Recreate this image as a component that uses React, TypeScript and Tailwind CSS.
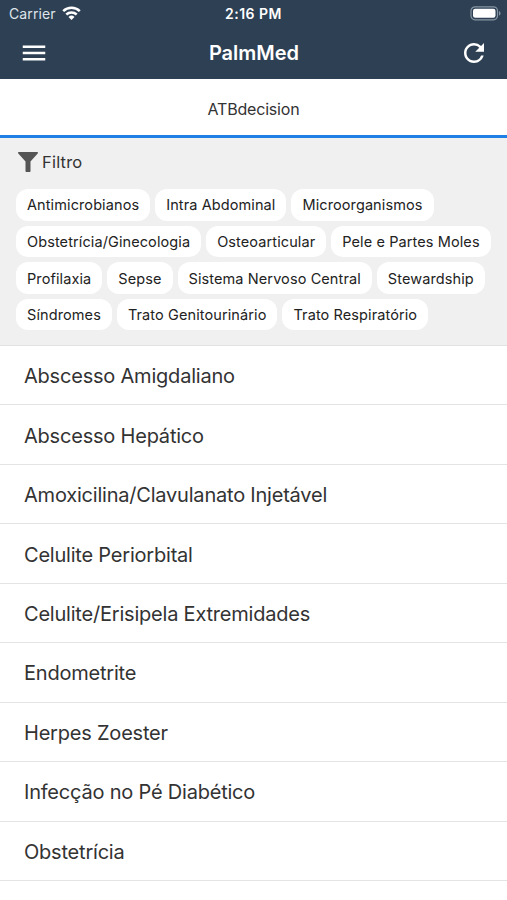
import { MdMenu, MdRefresh } from "react-icons/md";

const filters = [
  ["Antimicrobianos", "Intra Abdominal", "Microorganismos"],
  ["Obstetrícia/Ginecologia", "Osteoarticular", "Pele e Partes Moles"],
  ["Profilaxia", "Sepse", "Sistema Nervoso Central", "Stewardship"],
  ["Síndromes", "Trato Genitourinário", "Trato Respiratório"],
];

const topics = [
  "Abscesso Amigdaliano",
  "Abscesso Hepático",
  "Amoxicilina/Clavulanato Injetável",
  "Celulite Periorbital",
  "Celulite/Erisipela Extremidades",
  "Endometrite",
  "Herpes Zoester",
  "Infecção no Pé Diabético",
  "Obstetrícia",
];

function StatusBar() {
  return (
    <div className="grid grid-cols-3 items-center h-[27px] pl-[9px] pr-[6px] text-[14px]">
      <div className="flex items-center gap-[6px] text-[#dfe5ea] tracking-[0.1px]">
        <span>Carrier</span>
        <svg className="-mt-[2px]" width="19" height="14" viewBox="0 0 19 14" fill="none" stroke="white" strokeWidth="2.5">
          <path d="M1.2 5.2a12 12 0 0 1 16.6 0" />
          <path d="M4.3 8.5a7.6 7.6 0 0 1 10.4 0" />
          <path d="M9.5 14 6.5 10.9a4.3 4.3 0 0 1 6 0z" fill="white" stroke="none" />
        </svg>
      </div>
      <div className="-ml-[3px] text-center font-semibold tracking-[0.5px]">2:16 PM</div>
      <svg className="justify-self-end" width="31" height="15" viewBox="0 0 31 15">
        <rect x="1" y="0.8" width="26.5" height="13" rx="4" fill="none" stroke="#8795a3" strokeWidth="1.2" />
        <rect x="3" y="2.8" width="22.5" height="9" rx="2.2" fill="white" />
        <path d="M29 5v4.6c2-.8 2-3.8 0-4.6z" fill="#8795a3" />
      </svg>
    </div>
  );
}

export default function App() {
  return (
    <div className="h-[900px] overflow-hidden bg-white font-['Inter',sans-serif] text-[#333]">
      <header className="h-[79px] bg-[#2d4054] text-white">
        <StatusBar />
        <div className="flex items-center justify-between h-[51px] pl-[19px] pr-[18px]">
          <MdMenu size={30} />
          <h1 className="text-[20px] font-semibold">PalmMed</h1>
          <MdRefresh size={30} />
        </div>
      </header>

      {/* Tab */}
      <div className="flex items-center justify-center h-[59px] pt-[3px] border-b-[3px] border-[#1f7fe5] text-[16px] tracking-[-0.2px]">
        ATBdecision
      </div>

      {/* Filter chips */}
      <section className="h-[208px] bg-[#f0f0f0] border-b border-[#e2e2e2] px-4">
        <div className="flex items-center gap-1 h-[51px] pb-[3px] pl-[2px] text-[16.5px] tracking-[0.2px]">
          <svg width="20" height="20" viewBox="0 0 20 20" fill="#555">
            <path d="M.8 0h18.400c.9 0 1.100 1 .5 1.600L12.500 9.600V19c0 .6-.4 1-1 1h-3c-.6 0-1-.4-1-1V9.600L.3 1.600C-.3 1-.1 0 .8 0z" />
          </svg>
          <span>Filtro</span>
        </div>
        <div className="flex flex-col gap-[5px]">
          {filters.map((row) => (
            <div key={row[0]} className="flex gap-[5px]">
              {row.map((name) => (
                <button key={name} className="h-[31.6px] px-[11px] pt-px rounded-[12px] bg-white text-[14.5px] tracking-[0.1px] text-[#222] whitespace-nowrap">
                  {name}
                </button>
              ))}
            </div>
          ))}
        </div>
      </section>

      {/* Topics */}
      <ul>
        {topics.map((topic) => (
          <li key={topic} className="flex items-center h-[59.45px] pl-6 pt-[2px] border-b border-[#e4e4e4] text-[20px] tracking-[-0.21px]">
            <span>{topic}</span>
          </li>
        ))}
      </ul>
    </div>
  );
}
